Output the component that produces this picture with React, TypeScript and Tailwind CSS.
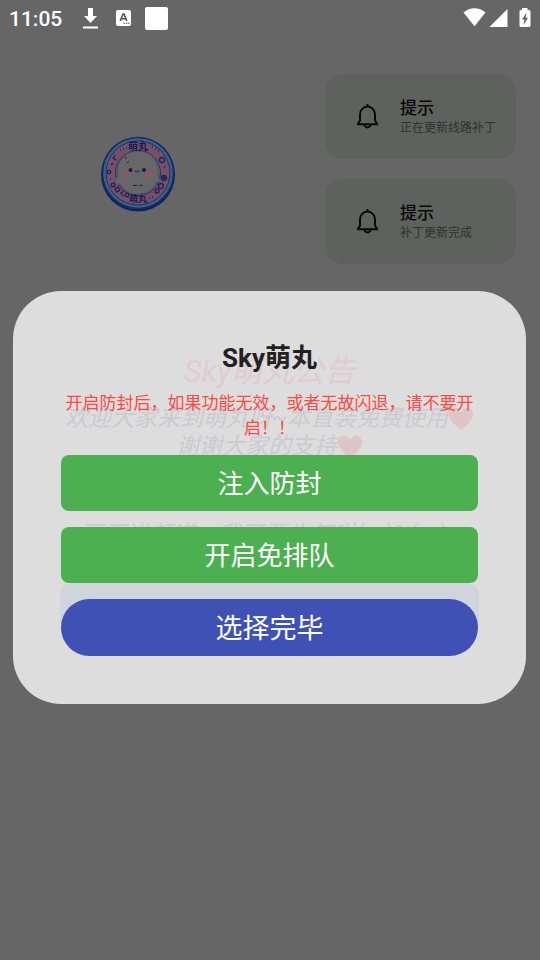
import React from "react";

const notices = [
  { title: "提示", text: "正在更新线路补丁" },
  { title: "提示", text: "补丁更新完成" },
];

function StatusBar() {
  return (
    <header className="flex h-9 items-center justify-between pr-[9px] pl-[9px] text-white">
      <div className="flex items-center">
        <span className="w-[73px] pt-[2px] text-[21px] leading-9 font-medium">11:05</span>
        <svg className="h-[22px] w-[17px]" viewBox="0 0 17 22" fill="currentColor" aria-hidden="true">
          <path d="M6 1h5v8h4l-6.500 7L2 9h4zM1 19.500h15v2H1z" />
        </svg>
        <svg className="ml-[17px] h-4 w-[15px]" viewBox="0 0 15 16" aria-hidden="true">
          <rect width="15" height="16" rx="2" fill="currentColor" />
          <path d="M4.200 11 7 4h1l2.800 7M5.300 8.700h4.400" fill="none" stroke="#555" strokeWidth="1.600" />
          <path d="M7.500 13.300h1.200M10 13.300h1.200M12.300 13.300h1.200" stroke="#555" strokeWidth="1.200" />
        </svg>
        <span className="ml-[14px] size-[23px] rounded-[2px] bg-white" />
      </div>
      <div className="flex items-center">
        <svg className="h-5 w-[23px]" viewBox="0 0 23 20" fill="currentColor" aria-hidden="true">
          <path d="M.5 4.500C7-1.200 16-1.200 22.500 4.500L11.500 18.200z" />
        </svg>
        <svg className="ml-[3px] size-[19px]" viewBox="0 0 19 19" fill="currentColor" aria-hidden="true">
          <path d="M18.500 0v18H.5z" />
        </svg>
        <svg className="ml-[11px] h-5 w-3" viewBox="0 0 12 20" aria-hidden="true">
          <path d="M3 0h5.500v2H10a1.500 1.500 0 0 1 1.500 1.500v14A1.500 1.500 0 0 1 10 19H2a1.500 1.500 0 0 1-1.500-1.500v-14A1.500 1.500 0 0 1 2 2h1z" fill="currentColor" />
          <path d="M7.500 4.500 3 11.500h2.300L4.500 17 9 9.700H6.700z" fill="#666" />
        </svg>
      </div>
    </header>
  );
}

function Logo() {
  return (
    <svg className="size-[76px]" viewBox="0 0 76 76" role="img" aria-label="Sky萌丸">
      <circle cx="38" cy="38.500" r="37" fill="#15215a" />
      <circle cx="38" cy="37" r="35.500" fill="#336681" stroke="#182b68" strokeWidth="1.500" />
      <circle cx="38" cy="37" r="32" fill="#765068" stroke="#2a2a66" />
      <circle cx="38" cy="37" r="22.500" fill="#56606c" stroke="#2b3168" />
      <path d="M19 27q2-5 6-6 1-4 7-5 4-2 12 0 8 2 11 8 4 8 3 16l2 3q0 4-4 3-5 12-18 12T20 48q-5 1-5-3 0-3 3-4-1-8 1-14z" fill="#676767" stroke="#4a4c66" strokeWidth=".6" />
      <path d="M25 23l2-2m0 6 2-2" stroke="#222552" />
      <circle cx="26" cy="37.500" r="3.300" fill="#93565e" />
      <circle cx="48.500" cy="37.500" r="3.300" fill="#93565e" />
      <circle cx="30.500" cy="34" r="2" fill="#171b58" />
      <circle cx="44" cy="34" r="2" fill="#171b58" />
      <path d="M35 35q1.200 1.800 2.400 0 1.200 1.800 2.400 0M33 49q2 1.500 4 0m2 0q2 1.500 4 0" fill="none" stroke="#171b58" />
      <g fill="none" stroke="#20205f" strokeWidth="1.300">
        <circle cx="62" cy="24" r="2.500" />
        <circle cx="64" cy="42" r="2.500" />
        <path d="M62 42h4m-2-2v4" />
        <circle cx="61" cy="50" r="2.500" />
        <circle cx="57" cy="55" r="2" />
        <circle cx="9" cy="36" r="1.700" />
        <path d="m11 29 2-2m0-5 3 2m-1-5-2 4M11 48l3-1 1 3-3 1zm4 5 3-2 2 3-3 2zm9 2-3 2 2 3m3-3 3 1-1 3-3-1z" />
      </g>
      <path d="M20 14h1m2-1h1m2-1h1m25-1h1m2 2h1m2 2h1M49 62h1m2-1h1M10 43h1m53-12h1" stroke="#20205f" strokeWidth="1.500" />
      <text x="38" y="14" textAnchor="middle" fontSize="10" fontWeight="700" fill="#171b58">萌丸</text>
      <text x="38" y="66" textAnchor="middle" fontSize="9" fontWeight="700" fill="#171b58">萌丸</text>
    </svg>
  );
}

function Bell() {
  return (
    <svg className="h-[26px] w-[23px] shrink-0" viewBox="0 0 23 26" fill="none" stroke="#080908" strokeWidth="2" aria-hidden="true">
      <path d="M4 10.500a7.500 8 0 0 1 15 0v6l2.300 3.800H1.700L4 16.500z" strokeLinejoin="round" />
      <path d="M11.500 0v3" />
      <path d="M8 21q3.500 5 7 0" />
    </svg>
  );
}

function Notice({ title, text }: { title: string; text: string }) {
  return (
    <li className="flex h-[85px] items-center rounded-[18px] bg-[#5e615e] pl-[31px]">
      <Bell />
      <div className="ml-[21px] pt-px">
        <p className="text-[17px] leading-[22px] font-medium text-[#080908]">{title}</p>
        <p className="text-xs leading-[18px] text-[#303230]">{text}</p>
      </div>
    </li>
  );
}

function Heart() {
  return (
    <svg className="size-[26px] shrink-0" viewBox="0 0 26 26" fill="#dfc5c5" aria-hidden="true">
      <path d="M13 24Q1 15 1 8.500C1 1 10-1 13 6c3-7 12-5 12 2.500Q25 15 13 24z" />
    </svg>
  );
}

/* Announcement that shows faintly through the dialog's surface. */
function Announcement() {
  return (
    <div className="absolute inset-x-0 top-0 px-[47px] pt-[61px] text-[23px] leading-7 whitespace-nowrap text-[#cbcbd2] italic" aria-hidden="true">
      <p className="text-center text-[31px] leading-10 text-[#e2cbd3]">Sky萌丸公告</p>
      <div className="mt-[13px] flex items-center justify-center">
        欢迎大家来到萌丸呀~本直装免费使用<Heart />
      </div>
      <div className="flex items-center justify-center">
        谢谢大家的支持<Heart />
      </div>
      <p className="mt-[60px] pl-5">再不进频道，我可要生气啦(&gt;_)%(&gt;_)</p>
      <div className="mt-[34px] h-12 rounded-xl bg-[#d0d5dd]" />
    </div>
  );
}

export default function App() {
  return (
    <div className="relative min-h-screen bg-[#666] font-[Roboto,'Noto_Sans_CJK_SC',sans-serif]">
      <StatusBar />
      <main className="flex items-start pt-[38px] pr-6">
        <div className="flex flex-1 justify-center pt-[62px] pr-[49px]">
          <Logo />
        </div>
        <ul className="flex w-[191px] flex-col gap-5">
          {notices.map((n) => (
            <Notice key={n.text} title={n.title} text={n.text} />
          ))}
        </ul>
      </main>

      <div className="absolute inset-0 flex items-center justify-center pt-[35px] pr-[14px] pl-[13px]">
        <section role="dialog" aria-labelledby="dialog-title" className="relative w-full rounded-[48px] bg-[#ddd] p-12">
          <Announcement />
          <div className="relative flex flex-col">
            <h1 id="dialog-title" className="text-center text-[26px] leading-[38px] font-bold text-[#212121]">Sky萌丸</h1>
            <p className="mt-[14px] text-center text-[17px] leading-[25px] text-[#fb4a45]">
              开启防封后，如果功能无效，或者无故闪退，请不要开启！！
            </p>
            <div className="mt-[14px] flex flex-col gap-4 text-white">
              <button type="button" className="h-14 rounded-lg bg-[#4caf50] pt-[3px] text-[26px]">注入防封</button>
              <button type="button" className="h-14 rounded-lg bg-[#4caf50] pt-[3px] text-[26px]">开启免排队</button>
              <button type="button" className="h-[57px] rounded-full bg-[#3f51b5] pt-[3px] text-[27px]">选择完毕</button>
            </div>
          </div>
        </section>
      </div>
    </div>
  );
}
